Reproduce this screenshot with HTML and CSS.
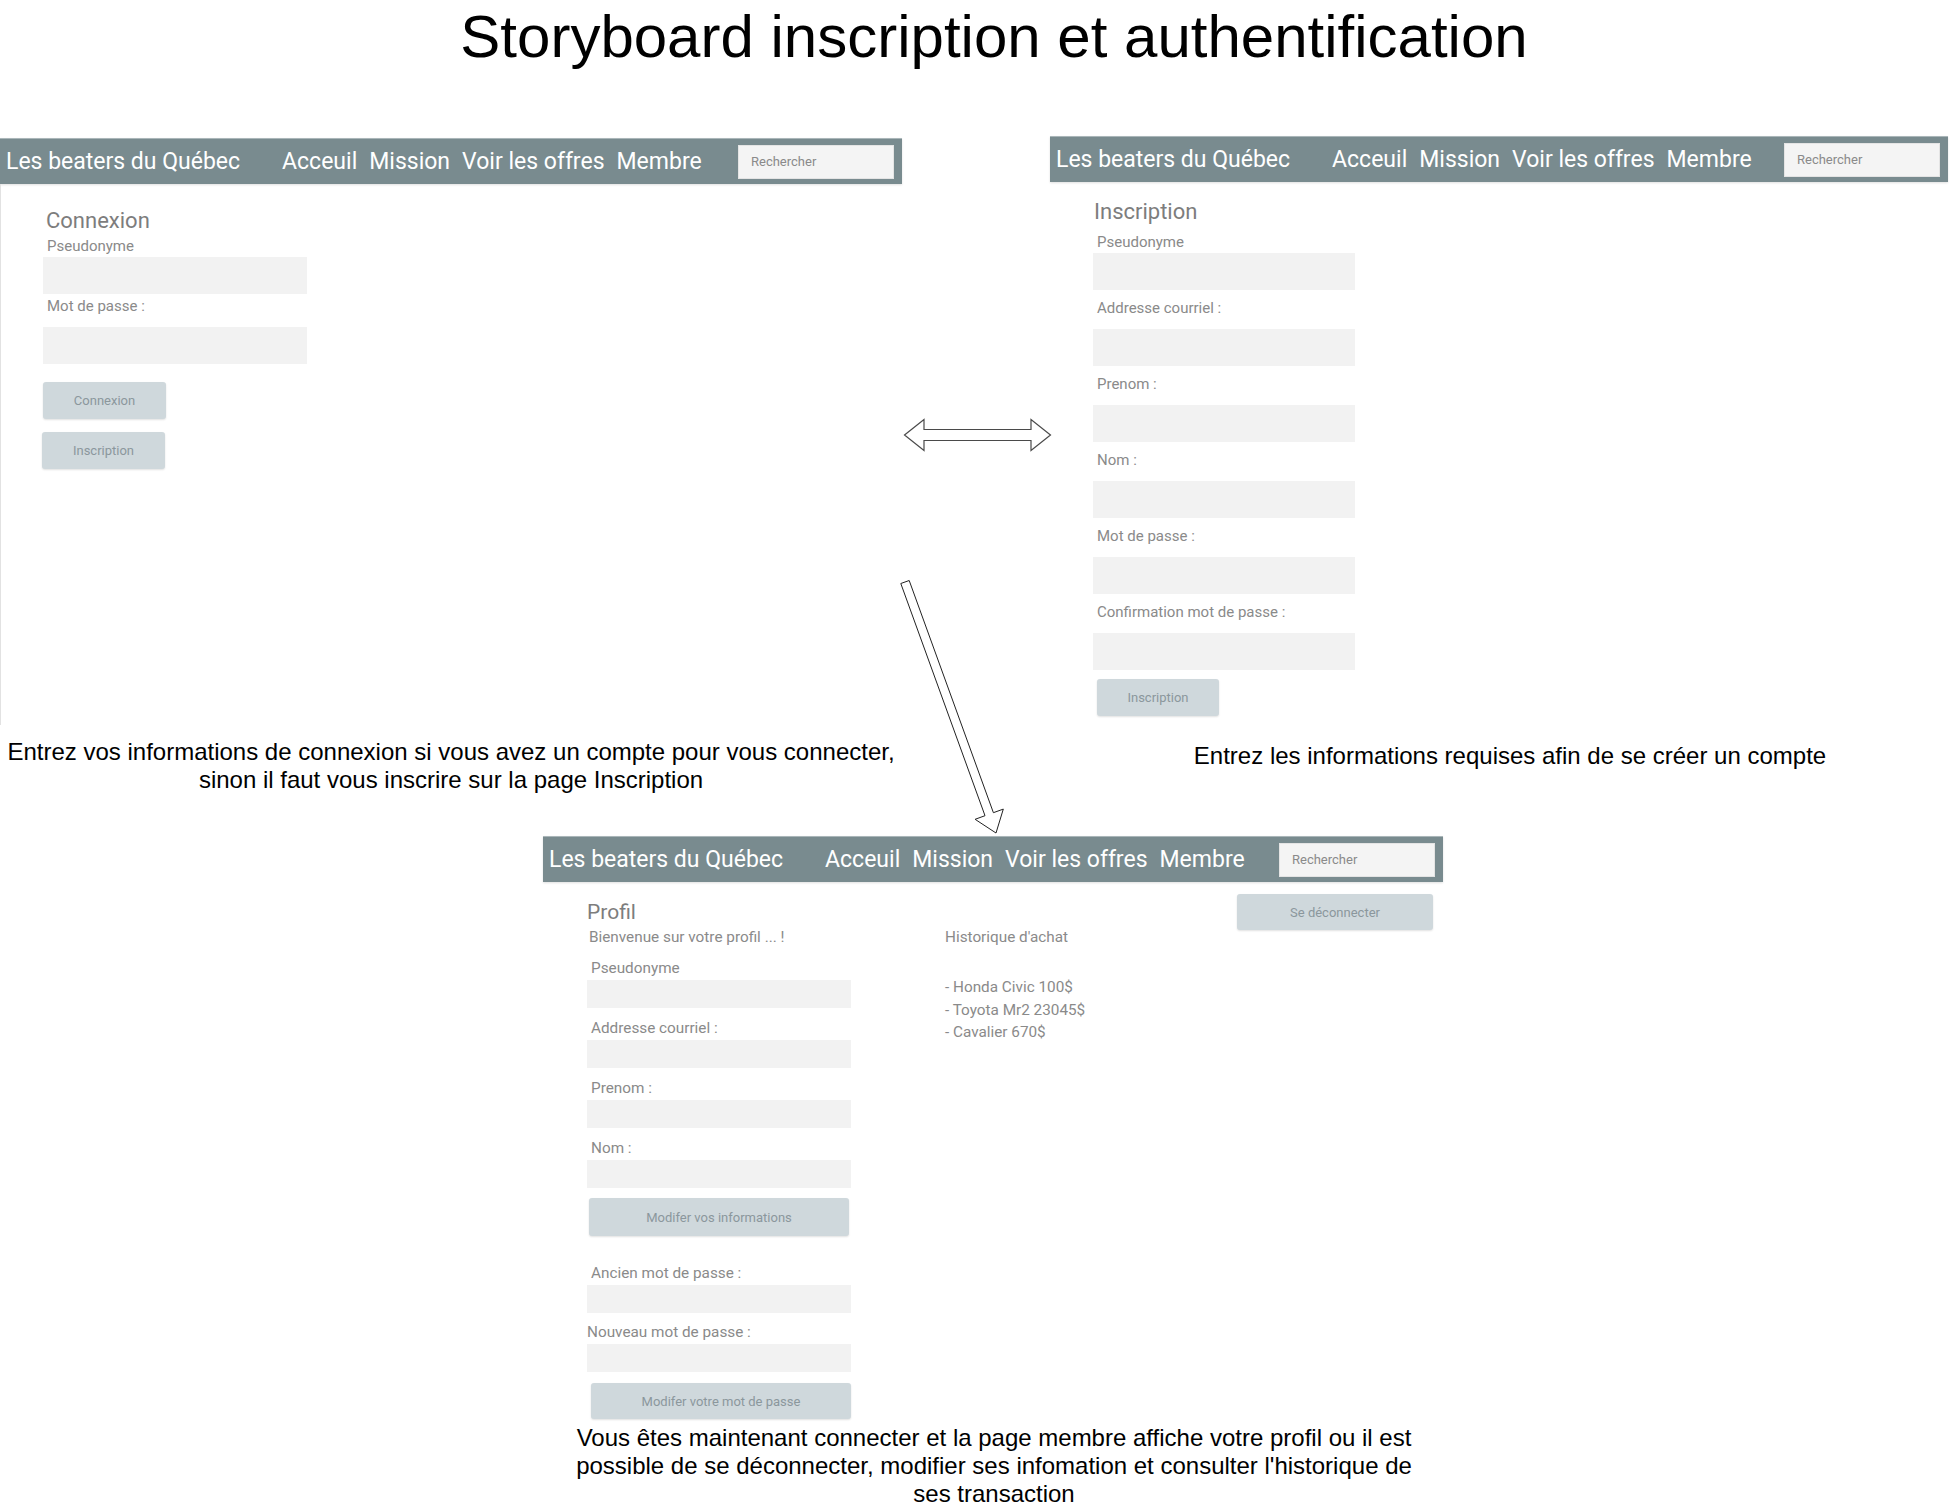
FILE: index.html
```html
<!DOCTYPE html>
<html lang="fr">
<head>
<meta charset="utf-8">
<title>Storyboard inscription et authentification</title>
<link rel="stylesheet" href="styles.css">
</head>
<body>
<div class="board">
  <h1 class="title">Storyboard inscription et authentification</h1>

  <section class="screen screen-login">
    <nav class="nav">
      <span class="brand">Les beaters du Québec</span>
      <span class="links"><span>Acceuil</span><span>Mission</span><span>Voir les offres</span><span>Membre</span></span>
      <span class="search">Rechercher</span>
    </nav>
    <div class="screen-body login">
      <h2 class="heading">Connexion</h2>
      <div class="label">Pseudonyme</div>
      <div class="input"></div>
      <div class="label">Mot de passe :</div>
      <div class="input input-spaced"></div>
      <button class="btn btn-first">Connexion</button>
      <button class="btn btn-second">Inscription</button>
    </div>
  </section>

  <section class="screen screen-signup">
    <nav class="nav">
      <span class="brand">Les beaters du Québec</span>
      <span class="links"><span>Acceuil</span><span>Mission</span><span>Voir les offres</span><span>Membre</span></span>
      <span class="search">Rechercher</span>
    </nav>
    <div class="screen-body signup">
      <h2 class="heading">Inscription</h2>
      <div class="label label-first">Pseudonyme</div>
      <div class="input input-first"></div>
      <div class="label">Addresse courriel :</div>
      <div class="input"></div>
      <div class="label">Prenom :</div>
      <div class="input"></div>
      <div class="label">Nom :</div>
      <div class="input"></div>
      <div class="label">Mot de passe :</div>
      <div class="input"></div>
      <div class="label">Confirmation mot de passe :</div>
      <div class="input"></div>
      <button class="btn">Inscription</button>
    </div>
  </section>

  <section class="screen screen-profile">
    <nav class="nav">
      <span class="brand">Les beaters du Québec</span>
      <span class="links"><span>Acceuil</span><span>Mission</span><span>Voir les offres</span><span>Membre</span></span>
      <span class="search">Rechercher</span>
    </nav>
    <div class="profile-body">
      <div class="profile-main">
        <h2 class="heading">Profil</h2>
        <div class="welcome">Bienvenue sur votre profil ... !</div>
        <div class="label label-first">Pseudonyme</div>
        <div class="input"></div>
        <div class="label">Addresse courriel :</div>
        <div class="input"></div>
        <div class="label">Prenom :</div>
        <div class="input"></div>
        <div class="label">Nom :</div>
        <div class="input"></div>
        <button class="btn btn-wide btn-info">Modifer vos informations</button>
        <div class="label label-pw">Ancien mot de passe :</div>
        <div class="input"></div>
        <div class="label label-flush">Nouveau mot de passe :</div>
        <div class="input"></div>
        <button class="btn btn-wide btn-pw">Modifer votre mot de passe</button>
      </div>
      <div class="history">
        <div class="history-title">Historique d'achat</div>
        <ul class="history-list">
          <li>- Honda Civic 100$</li>
          <li>- Toyota Mr2 23045$</li>
          <li>- Cavalier 670$</li>
        </ul>
      </div>
      <button class="btn logout">Se déconnecter</button>
    </div>
  </section>

  <p class="caption caption-login">Entrez vos informations de connexion si vous avez un compte pour vous connecter,<br>sinon il faut vous inscrire sur la page Inscription</p>
  <p class="caption caption-signup">Entrez les informations requises afin de se créer un compte</p>
  <p class="caption caption-profile">Vous êtes maintenant connecter et la page membre affiche votre profil ou il est<br>possible de se déconnecter, modifier ses infomation et consulter l'historique de<br>ses transaction</p>

  <svg class="arrows" viewBox="0 0 1950 1509" width="1950" height="1509" aria-hidden="true">
    <polygon points="904.5,435 924,419.5 924,429.5 1031,429.5 1031,419.5 1050.5,435 1031,450.5 1031,440.5 924,440.5 924,450.5" fill="#fff" stroke="#4a4a4a" stroke-width="1.2"/>
    <polygon points="900.8,583.5 985,815.7 975.1,819.3 996,833 1003.3,809.1 993.4,812.7 909.2,580.5" fill="#fff" stroke="#222" stroke-width="1"/>
  </svg>
</div>
</body>
</html>
```

FILE: styles.css
```css
* { box-sizing: border-box; }

body {
  margin: 0;
  background: #fff;
}

.board {
  position: relative;
  width: 1950px;
  height: 1509px;
  overflow: hidden;
  font-family: "Liberation Sans", Arial, sans-serif;
}

.title {
  position: absolute;
  left: 394px;
  top: 2px;
  width: 1200px;
  margin: 0;
  text-align: center;
  white-space: nowrap;
  font-weight: normal;
  font-size: 60px;
  line-height: 70px;
  color: #000;
}

/* ---------- screens (nodes of the storyboard) ---------- */
.screen {
  position: absolute;
  width: 902px;
  font-family: Roboto, "Noto Sans", sans-serif;
}
.screen-login { left: 0; top: 138px; }
.screen-signup { left: 1050px; top: 136px; width: 898px; }
.screen-profile { left: 543px; top: 836px; width: 900px; }

.nav {
  display: flex;
  align-items: center;
  height: 46px;
  padding: 0 8px 0 6px;
  background: #798b8f;
  border-top: 1px solid #aab6b9;
  box-shadow: 0 1px 2px rgba(0, 0, 0, 0.12);
  color: #fff;
  font-size: 23px;
  white-space: nowrap;
}
.brand { margin-right: 42px; }
.links { display: flex; gap: 12px; }
.search {
  margin-left: auto;
  width: 156px;
  height: 34px;
  display: flex;
  align-items: center;
  padding-left: 12px;
  background: #f4f4f4;
  border: 1px solid #e4e4e4;
  color: #8a8a8a;
  font-size: 13px;
}

.screen-body {
  display: flex;
  flex-direction: column;
  align-items: flex-start;
}

.heading {
  margin: 0;
  font-weight: normal;
  font-size: 22px;
  line-height: 26px;
  color: #7d7d7d;
  padding-left: 3px;
}
.label {
  font-size: 15px;
  line-height: 18px;
  color: #8a8a8a;
  padding-left: 4px;
}
.input {
  width: 264px;
  height: 37px;
  background: #f2f2f2;
}
.btn {
  display: block;
  width: 123px;
  height: 37px;
  padding: 0;
  border: 0;
  border-radius: 3px;
  background: #cfd8dc;
  box-shadow: 0 1px 2px rgba(0, 0, 0, 0.12);
  color: #8b979c;
  font-family: Roboto, "Noto Sans", sans-serif;
  font-size: 13px;
}

/* login */
.login {
  height: 541px;
  padding-left: 42px;
  border-left: 1px solid #e2e2e2;
}
.login .heading { margin-top: 24px; }
.login .label { margin-top: 3px; }
.login .input { margin-top: 2px; }
.login .input-spaced { margin-top: 12px; }
.login .btn-first { margin-top: 18px; }
.login .btn-second { margin-top: 13px; margin-left: -1px; }

/* signup */
.signup { padding-left: 43px; }
.signup .heading { margin-top: 17px; padding-left: 1px; }
.signup .input { width: 262px; margin-top: 12px; }
.signup .label { margin-top: 9px; }
.signup .label-first { margin-top: 8px; }
.signup .input-first { margin-top: 2px; }
.signup .btn { margin-top: 9px; margin-left: 4px; width: 122px; }

/* profile */
.profile-body {
  display: flex;
  align-items: flex-start;
  padding: 0 10px 0 44px;
}
.profile-main {
  width: 264px;
  display: flex;
  flex-direction: column;
  align-items: flex-start;
}
.profile-main .heading {
  margin-top: 18px;
  font-size: 21px;
  line-height: 25px;
  padding-left: 0;
}
.welcome {
  margin-top: 4px;
  padding-left: 2px;
  font-size: 15.3px;
  line-height: 17px;
  color: #8a8a8a;
}
.profile-main .label {
  margin-top: 12px;
  font-size: 15.3px;
  line-height: 17px;
}
.profile-main .label-first { margin-top: 14px; }
.profile-main .label-pw { margin-top: 29px; }
.profile-main .label-flush { margin-top: 11px; padding-left: 0; }
.profile-main .input { height: 28px; margin-top: 3px; }
.btn-wide { width: 260px; }
.btn-info { margin-top: 10px; margin-left: 2px; height: 38px; }
.btn-pw { margin-top: 11px; margin-left: 4px; height: 36px; }

.history {
  margin-left: 94px;
  margin-top: 47px;
  font-size: 15.3px;
  color: #8a8a8a;
}
.history-title { line-height: 17px; }
.history-list {
  list-style: none;
  margin: 30px 0 0;
  padding: 0;
  line-height: 22.5px;
}
.logout {
  margin-left: auto;
  margin-top: 12px;
  width: 196px;
  height: 36px;
}

/* ---------- captions ---------- */
.caption {
  position: absolute;
  margin: 0;
  text-align: center;
  font-size: 24px;
  line-height: 28px;
  color: #000;
  white-space: nowrap;
}
.caption-login { left: 1px; top: 738px; width: 900px; }
.caption-signup { left: 1110px; top: 742px; width: 800px; }
.caption-profile { left: 544px; top: 1424px; width: 900px; }

.arrows {
  position: absolute;
  left: 0;
  top: 0;
  pointer-events: none;
}
```
